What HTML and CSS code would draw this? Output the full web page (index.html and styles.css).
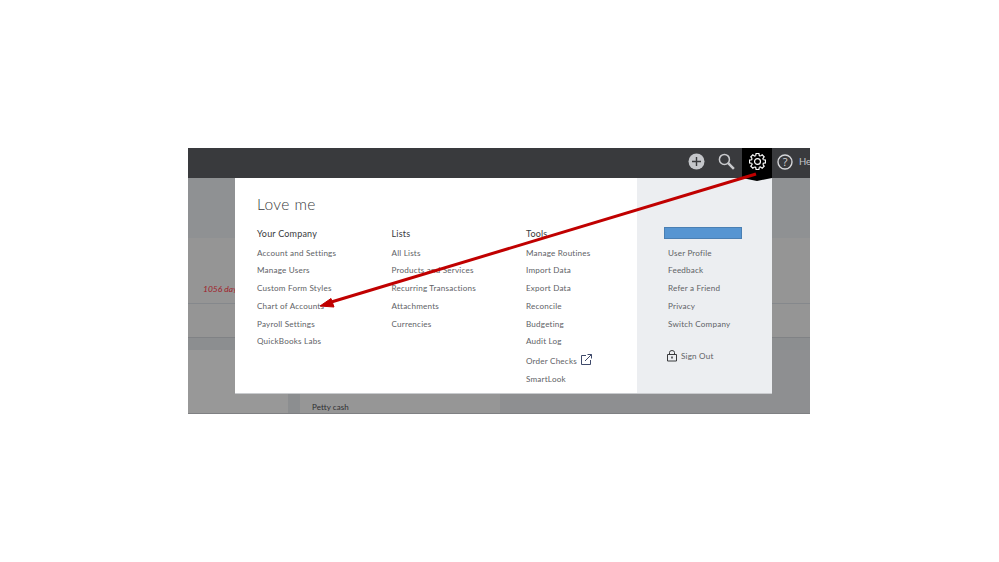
FILE: index.html
```html
<!DOCTYPE html>
<html lang="en">
<head>
    <meta charset="UTF-8">
    <title>Love me</title>
    <link rel="stylesheet" href="styles.css">
</head>
<body>
    <div class="frame">
        <div class="topbar">
            <svg class="icon" width="17" height="17" viewBox="0 0 17 17">
                <circle cx="8.5" cy="8.5" r="8" fill="#c4c6ca"/>
                <path d="M8.5 4v9M4 8.5h9" stroke="#393a3d" stroke-width="1.4"/>
            </svg>
            <svg class="icon search" width="17" height="17" viewBox="0 0 18 18" fill="none" stroke="#c9cacd">
                <circle cx="6.8" cy="6.8" r="5.3" stroke-width="1.6"/>
                <path d="M10.8 10.8l6 6" stroke-width="2.6"/>
            </svg>
            <div class="gear-tab">
                <svg width="17" height="17" viewBox="0 0 24 24" fill="none" stroke="#fff" stroke-width="1.700">
                    <defs>
                        <path id="tooth" d="M9.49 3.78L10 .67H14L14.51 3.78L16.04 4.41"/>
                    </defs>
                    <circle cx="12" cy="12" r="4.200"/>
                    <use href="#tooth"/>
                    <use href="#tooth" transform="rotate(45 12 12)"/>
                    <use href="#tooth" transform="rotate(90 12 12)"/>
                    <use href="#tooth" transform="rotate(135 12 12)"/>
                    <use href="#tooth" transform="rotate(180 12 12)"/>
                    <use href="#tooth" transform="rotate(225 12 12)"/>
                    <use href="#tooth" transform="rotate(270 12 12)"/>
                    <use href="#tooth" transform="rotate(315 12 12)"/>
                </svg>
            </div>
            <svg class="icon help" width="16" height="16" viewBox="0 0 16 16">
                <circle cx="8" cy="8" r="7" fill="none" stroke="#d4d5d8" stroke-width="1.400"/>
                <text x="8" y="11.500" class="help-mark">?</text>
            </svg>
            <span class="help-label">He</span>
        </div>

        <div class="backdrop">
            <div class="band-top"></div>
            <div class="row-overdue"><em>1056 days</em></div>
            <div class="band-spacer"></div>
            <div class="band-mid"></div>
            <div class="row-petty">
                <div class="petty-gutter"></div>
                <div class="petty-cell">Petty cash</div>
            </div>
        </div>

        <div class="menu">
            <div class="menu-main">
                <h1>Love me</h1>
                <div class="columns">
                    <div class="col">
                        <h2>Your Company</h2>
                        <a>Account and Settings</a>
                        <a>Manage Users</a>
                        <a>Custom Form Styles</a>
                        <a>Chart of Accounts</a>
                        <a>Payroll Settings</a>
                        <a>QuickBooks Labs</a>
                    </div>
                    <div class="col">
                        <h2>Lists</h2>
                        <a>All Lists</a>
                        <a>Products and Services</a>
                        <a>Recurring Transactions</a>
                        <a>Attachments</a>
                        <a>Currencies</a>
                    </div>
                    <div class="col">
                        <h2>Tools</h2>
                        <a>Manage Routines</a>
                        <a>Import Data</a>
                        <a>Export Data</a>
                        <a>Reconcile</a>
                        <a>Budgeting</a>
                        <a>Audit Log</a>
                        <a class="with-icon">Order Checks
                            <svg width="11" height="11" viewBox="0 0 11 11" fill="none" stroke="#3f4a6b" stroke-width="1">
                                <path d="M5 1.500H.5v9h9V6M4 7l6.500-6.500M6.500.5h4v4"/>
                            </svg>
                        </a>
                        <a>SmartLook</a>
                    </div>
                </div>
            </div>
            <div class="menu-side">
                <div class="name-box"></div>
                <a>User Profile</a>
                <a>Feedback</a>
                <a>Refer a Friend</a>
                <a>Privacy</a>
                <a>Switch Company</a>
                <a class="sign-out">
                    <svg width="10" height="12" viewBox="0 0 10 12" fill="none" stroke="#393a3d" stroke-width="1">
                        <path d="M2.500 4V2.500a2.500 2 0 0 1 5 0V4M.5 4.500h9v6.500h-9z"/>
                        <path d="M5 6.500v2" stroke-width="1.500"/>
                    </svg>
                    Sign Out
                </a>
            </div>
        </div>

        <svg class="arrow" width="622" height="266" viewBox="0 0 622 266">
            <path d="M568 26L140 155" stroke="#c00000" stroke-width="3" fill="none"/>
            <path d="M132 158L143 150.500L146 159z" fill="#c00000" stroke="#c00000"/>
        </svg>
    </div>
</body>
</html>
```

FILE: styles.css
```css
* {
    margin: 0;
    padding: 0;
    box-sizing: border-box;
}

body {
    background: white;
    font-family: Lato, "Liberation Sans", sans-serif;
    padding: 148px 0 0 188px;
}

.frame {
    width: 622px;
    height: 266px;
    position: relative;
    overflow: hidden;
    display: flex;
    flex-direction: column;
}

.topbar {
    height: 30px;
    background: #393a3d;
    display: flex;
    align-items: flex-start;
    padding: 5px 0 0 500px;
}

.icon {
    flex: none;
}

.search {
    margin-left: 13px;
}

.gear-tab {
    width: 30px;
    height: 30px;
    margin: -5px 0 0 7px;
    padding-bottom: 3px;
    background: black;
    display: flex;
    align-items: center;
    justify-content: center;
    flex: none;
    position: relative;
    z-index: 2;
}

/* little notch under the active tab */
.gear-tab::after {
    content: '';
    position: absolute;
    left: 0;
    top: 30px;
    border-left: 15px solid transparent;
    border-right: 15px solid transparent;
    border-top: 3px solid black;
}

.help {
    margin: 1px 0 0 5px;
}

.help-mark {
    font-size: 11px;
    fill: #d4d5d8;
    text-anchor: middle;
    font-family: "Open Sans", sans-serif;
}

.help-label {
    margin: 1px 0 0 6px;
    color: #c4c6ca;
    font-size: 9.500px;
    line-height: 16px;
    white-space: nowrap;
}

.backdrop {
    flex: 1;
    background: #969696;
    display: flex;
    flex-direction: column;
    min-height: 0;
    border-bottom: 1px solid #7f8083;
}

.band-top {
    height: 60px;
    background: #8f9193;
}

.row-overdue {
    height: 66px;
    background: #959595;
    border-bottom: 1px solid #85888c;
    padding: 46px 0 0 15px;
    font-size: 8.500px;
    line-height: 10px;
    color: #a11d2a;
}

.band-spacer {
    height: 34px;
    background: #959595;
    border-bottom: 1px solid #808285;
}

.band-mid {
    height: 12px;
    background: #8c8e90;
}

.row-petty {
    flex: 1;
    display: flex;
    padding-left: 100px;
    background: linear-gradient(90deg, #989898 312px, #8e8f91 312px);
}

.petty-gutter {
    width: 12px;
    background: #8c8e90;
}

.petty-cell {
    width: 200px;
    background: #969696;
    padding: 52px 0 0 12px;
    font-size: 8px;
    letter-spacing: 0.05px;
    line-height: 10px;
    color: #2f2f31;
}

.menu {
    position: absolute;
    left: 47px;
    top: 30px;
    width: 537px;
    height: 216px;
    background: white;
    border-bottom: 1px solid #c9cbce;
    display: flex;
    color: #606266;
    font-size: 8.100px;
    letter-spacing: 0.2px;
}

.menu a {
    display: block;
    line-height: 10px;
    white-space: nowrap;
}

.menu-main {
    width: 402px;
    padding: 18px 0 0 22px;
}

h1 {
    font-size: 15.500px;
    font-weight: 300;
    line-height: 16px;
    letter-spacing: 0.4px;
    color: #393a3d;
}

.columns {
    display: flex;
    margin-top: 16px;
}

.col {
    width: 134.500px;
    flex: none;
}

h2 {
    font-size: 9px;
    font-weight: 400;
    line-height: 11px;
    color: #393a3d;
    margin-bottom: 8.500px;
}

.col a {
    margin-bottom: 7.800px;
}

.with-icon svg {
    margin-left: 2px;
    vertical-align: -1px;
}

.col .with-icon {
    height: 10px;
    margin-bottom: 10px;
}

.menu-side {
    flex: 1;
    background: #eceef1;
    padding: 49px 0 0 27px;
}

.name-box {
    width: 78px;
    height: 12px;
    background: #5695d2;
    border: 1px solid #4a7fb3;
    margin-bottom: 8.500px;
}

.menu-side a {
    margin: 0 0 7.800px 4px;
}

.menu-side .sign-out {
    margin: 21px 0 0 3px;
    display: flex;
    align-items: center;
    gap: 4px;
}

.arrow {
    position: absolute;
    left: 0;
    top: 0;
    z-index: 3;
}
```
